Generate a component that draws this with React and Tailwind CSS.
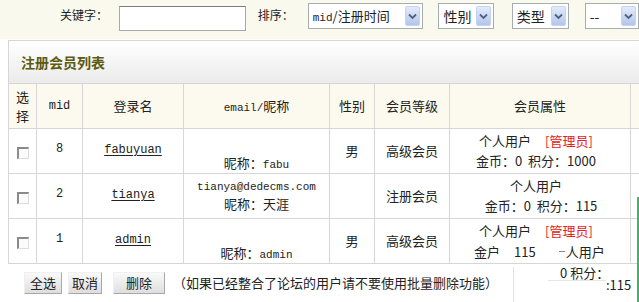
import React from 'react';

const cn = "font-['Noto_Sans_CJK_SC',sans-serif]";
const mono = "font-['Liberation_Mono',monospace]";

const members = [
  { mid: '8', name: 'fabuyuan', email: '', nick: 'fabu', latinNick: true, sex: '男', rank: '高级会员', admin: true, score: '1000' },
  { mid: '2', name: 'tianya', email: 'tianya@dedecms.com', nick: '天涯', latinNick: false, sex: '', rank: '注册会员', admin: false, score: '115' },
  { mid: '1', name: 'admin', email: '', nick: 'admin', latinNick: true, sex: '男', rank: '高级会员', admin: true, score: '115', broken: true },
];

function Select({ className, children }) {
  return (
    <div className={`flex items-center justify-between h-[26px] mt-[3px] border border-[#a5acb2] bg-white pl-[4px] pr-[2px] ${className}`}>
      <span className="leading-none whitespace-nowrap text-[#222]">{children}</span>
      <span className="flex items-center justify-center w-[15px] h-[20px] rounded-[2px] bg-linear-to-b from-[#e3ebfa] to-[#b3c6ea] border border-[#c3d3f1]">
        <svg width="9" height="7" viewBox="0 0 9 7">
          <path d="M1 1.5 L4.5 5 L8 1.5" fill="none" stroke="#4d6185" strokeWidth="1.8" />
        </svg>
      </span>
    </div>
  );
}

function Checkbox() {
  return (
    <span className="inline-block w-[12px] h-[12px] bg-[#fbfbfb] border-t-2 border-l-2 border-t-[#8a8a8a] border-l-[#8a8a8a] border-r border-b border-r-[#dcdcdc] border-b-[#dcdcdc] align-middle" />
  );
}

function Button({ className, children }) {
  return (
    <span className={`flex items-center justify-center h-[22px] text-[13px] text-[#222] bg-linear-to-b from-[#fafafa] to-[#dedede] border border-t-[#f0f0f0] border-l-[#f0f0f0] border-r-[#a8a8a8] border-b-[#a8a8a8] ${className}`}>
      {children}
    </span>
  );
}

export default function App() {
  return (
    <div className={`relative w-[639px] h-[302px] overflow-hidden bg-white text-[#222] ${cn}`}>
      {/* filter bar */}
      <div className="flex items-start h-[39px] bg-[#f9f9ee] pl-[60px] text-[12px]">
        <span className="mt-[8px] leading-[14px] whitespace-nowrap">关键字：</span>
        <div className="ml-[11px] mt-[6px] w-[142px] h-[25px] bg-white border border-[#a8a8a8] border-t-[#7c7c7c]" />
        <span className="ml-[12px] mt-[8px] leading-[14px] whitespace-nowrap">排序：</span>
        <Select className="ml-[14px] w-[129px] text-[13px]">
          <span className={`${mono} text-[11px]`}>mid</span>/注册时间
        </Select>
        <Select className="ml-[15px] w-[61px] text-[14px]">性别</Select>
        <Select className="ml-[18px] w-[63px] text-[14px]">类型</Select>
        <Select className="ml-[16px] w-[60px] text-[14px]">--</Select>
      </div>

      {/* list */}
      <div className="pl-[8px] mt-[1px]">
        <div className="flex items-center h-[43px] pl-[12px] border-t border-l border-[#d6d6d6] bg-linear-to-b from-white to-[#ebebeb]">
          <span className="text-[14px] font-bold text-[#5b5b12]">注册会员列表</span>
        </div>
        <table className="table-fixed border-collapse w-[700px] text-center">
          <colgroup>
            <col className="w-[28px]" />
            <col className="w-[46px]" />
            <col className="w-[101px]" />
            <col className="w-[146px]" />
            <col className="w-[45px]" />
            <col className="w-[75px]" />
            <col className="w-[181px]" />
            <col className="w-[78px]" />
          </colgroup>
          <thead>
            <tr className="h-[45px] bg-[#fcfaee] text-[13px]">
              <th className="font-normal border border-[#d6d6d6] leading-[19px] px-0">选<br />择</th>
              <th className={`font-normal border border-[#d6d6d6] ${mono} text-[12px]`}>mid</th>
              <th className="font-normal border border-[#d6d6d6]">登录名</th>
              <th className="font-normal border border-[#d6d6d6]">
                <span className={`${mono} text-[11px]`}>email/</span>昵称
              </th>
              <th className="font-normal border border-[#d6d6d6]">性别</th>
              <th className="font-normal border border-[#d6d6d6]">会员等级</th>
              <th className="font-normal border border-[#d6d6d6]">会员属性</th>
              <th className="font-normal border border-[#d6d6d6]"></th>
            </tr>
          </thead>
          <tbody>
            {members.map((m) => (
              <tr key={m.mid} className="h-[45px] bg-white text-[13px]">
                <td className="border border-[#d6d6d6]"><Checkbox /></td>
                <td className={`border border-[#d6d6d6] ${mono} text-[12px] pb-[4px]`}>{m.mid}</td>
                <td className="border border-[#d6d6d6] pb-[6px]">
                  <span className={`${mono} text-[12px] underline underline-offset-2`}>{m.name}</span>
                </td>
                <td className="border border-[#d6d6d6] leading-[16px]">
                  {m.email ? (
                    <div className={`${mono} text-[11px] -mt-[2px]`}>{m.email}</div>
                  ) : (
                    <div className="h-[22px]" />
                  )}
                  <div className={m.email ? 'mt-[1px]' : '-mb-[3px]'}>
                    昵称：{m.latinNick ? <span className={`${mono} text-[11px]`}>{m.nick}</span> : m.nick}
                  </div>
                </td>
                <td className="border border-[#d6d6d6]">{m.sex}</td>
                <td className="border border-[#d6d6d6]">{m.rank}</td>
                <td className="border border-[#d6d6d6] leading-[20px] pr-[8px]">
                  <div className={m.broken ? 'mt-[1px]' : ''}>
                    个人用户
                    {m.admin && <span className="ml-[14px] text-[#e8201c]">[管理员]</span>}
                  </div>
                  {m.broken ? (
                    <div className="flex items-center h-[22px] pl-[24px] whitespace-nowrap">
                      <span>金户</span>
                      <span className="ml-[14px]">115</span>
                      <span className="ml-[23px] w-[6px] h-px bg-[#888]" />
                      <span className="ml-[1px]">人用户</span>
                    </div>
                  ) : (
                    <div className={m.admin ? '' : 'pl-[10px]'}>金币：0&nbsp; 积分：{m.score}</div>
                  )}
                </td>
                <td className="border border-[#d6d6d6]"></td>
              </tr>
            ))}
          </tbody>
        </table>
      </div>

      {/* actions */}
      <div className="flex items-center pl-[24px] mt-[8px]">
        <Button className="w-[38px]">全选</Button>
        <Button className="w-[34px] ml-[6px]">取消</Button>
        <Button className="w-[52px] ml-[11px]">删除</Button>
        <span className="ml-[8px] text-[13px] whitespace-nowrap">（如果已经整合了论坛的用户请不要使用批量删除功能）</span>
      </div>

      {/* leftover paint fragments below the last row */}
      <div className="absolute left-[513px] top-[267px] w-px h-[35px] bg-[#e2e2e2]" />
      <div className="absolute left-[548px] top-[265px] w-[58px] h-[16px] bg-white text-[13px] leading-[16px] pl-[12px] border-b border-[#e6e6e6] whitespace-nowrap">0 积分：</div>
      <div className="absolute left-[606px] top-[277px] w-[26px] h-[16px] bg-white text-[13px] leading-[16px] whitespace-nowrap">:115</div>
      <div className="absolute left-[637px] top-[197px] w-[2px] h-[105px] bg-[#44b36a]" />
    </div>
  );
}
